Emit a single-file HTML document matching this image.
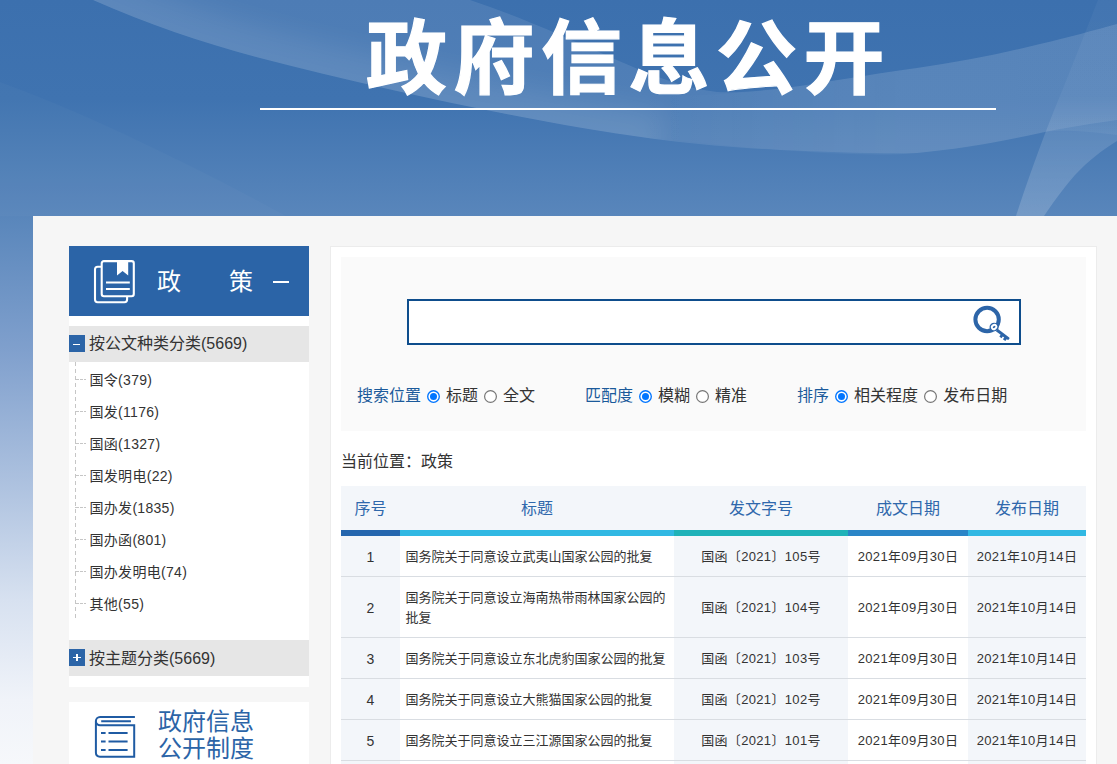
<!DOCTYPE html>
<html lang="zh-CN">
<head>
<meta charset="utf-8">
<title>政府信息公开</title>
<style>
*{box-sizing:border-box;margin:0;padding:0}
html,body{width:1117px;height:764px;overflow:hidden}
body{font-family:"Liberation Sans","Noto Sans CJK SC",sans-serif;color:#333;position:relative;background:#f3f6fa}
#bg{position:absolute;left:0;top:0;width:1117px;height:764px;z-index:0}
#title{position:absolute;left:0;top:0;width:1257px;text-align:center;color:#fff;font-weight:700;font-size:81px;line-height:82px;letter-spacing:6.5px;top:17.8px;-webkit-text-stroke:1.2px #fff;z-index:2;white-space:nowrap}
#tline{position:absolute;left:260px;top:108px;width:736px;height:2px;background:#fff;z-index:2}
#wrap{position:absolute;left:33px;top:216px;width:1190px;height:600px;background:#f6f6f6;z-index:1}
#side{position:absolute;left:36px;top:30px;width:240px;height:441px;background:#fff}
#shead{height:70px;background:#2b64a7;color:#fff;position:relative}
#shead .t{position:absolute;left:88px;top:20px;font-size:24px;line-height:32px;white-space:nowrap}
#shead .t span{display:inline-block}
#shead .mn{position:absolute;left:204px;top:34.5px;width:16px;height:2px;background:#fff}
.bar{position:absolute;left:0;width:240px;height:36px;background:#e6e6e6;font-size:16px;line-height:36px;padding-left:20px;color:#333;white-space:nowrap}
.bar i{position:absolute;left:0;top:9px;width:16px;height:17px;background:#2b64a7}
.bar i:before{content:"";position:absolute;left:3.8px;top:8.8px;width:7.6px;height:1.3px;background:#fff}
.bar i.plus:before{top:7.8px;width:8.4px}
.bar i.plus:after{content:"";position:absolute;left:7.3px;top:5px;width:1.4px;height:7px;background:#fff}
#tree{position:absolute;left:6px;top:116px;width:200px;height:258px;background:repeating-linear-gradient(to bottom,#c6c6c6 0,#c6c6c6 4px,transparent 4px,transparent 7px) left top/1px 100% no-repeat}
#tree div{position:relative;height:32px;line-height:37px;font-size:14px;padding-left:14.5px;letter-spacing:.3px;color:#333;white-space:nowrap}
#tree div:before{content:"";position:absolute;left:0;top:17px;width:11px;height:1px;background:linear-gradient(to right,#c6c6c6 0,#c6c6c6 4px,transparent 4px,transparent 5px,#c6c6c6 5px,#c6c6c6 8px,transparent 8px,transparent 9px,#c6c6c6 9px)}
#side2{position:absolute;left:36px;top:486px;width:240px;height:120px;background:#fff}
#side2 .t{position:absolute;left:89px;top:6px;font-size:24px;line-height:27.4px;color:#2b64a7;white-space:nowrap}
#main{position:absolute;left:297px;top:30px;width:767px;height:600px;background:#fff;border:1px solid #ececec}
#sbox{position:absolute;left:10px;top:10px;width:745px;height:174px;background:#fafafa}
#sinput{position:absolute;left:66px;top:42px;width:614px;height:46px;border:2px solid #0e4d8c;background:#fff}
#opts{position:absolute;left:16px;top:128px;font-size:16px;line-height:22px;white-space:nowrap;color:#333}
#opts b{font-weight:normal;color:#1b5a9b}
.rd{display:inline-block;width:13px;height:13px;vertical-align:-2px;margin:0 6px}
#pos{position:absolute;left:10px;top:204px;font-size:16px;line-height:22px;color:#333}
table{position:absolute;left:10px;top:239px;width:745px;border-collapse:separate;border-spacing:0;table-layout:fixed;font-size:13px}
th{height:50px;padding:0 0 2px 0;font-weight:normal;font-size:16px;color:#2f68ac;background:#f3f6fa;border-bottom:6px solid #31b8e3;text-align:center}
td{height:41px;border-bottom:1px solid #d9dde2;text-align:center;color:#333;line-height:20px;white-space:nowrap;letter-spacing:.33px;padding:1px 0 0 0}
td.l{text-align:left;padding:1px 6px 0 5.5px;white-space:normal;letter-spacing:0}
td:nth-child(odd){background:#f3f6fa}
td:first-child{font-size:14px;letter-spacing:0}
</style>
</head>
<body>
<svg id="bg" viewBox="0 0 1117 764" preserveAspectRatio="none">
<defs>
<linearGradient id="g1" x1="0" y1="0" x2="0" y2="1">
<stop offset="0" stop-color="#3c70ae"/><stop offset="0.13" stop-color="#3f73b0"/><stop offset="0.283" stop-color="#5986bb"/><stop offset="0.46" stop-color="#80a0cd"/><stop offset="0.64" stop-color="#afc3e0"/><stop offset="0.785" stop-color="#d7e1f0"/><stop offset="0.916" stop-color="#f0f3f9"/><stop offset="1" stop-color="#f6f8fb"/>
</linearGradient>
<linearGradient id="g2" gradientUnits="userSpaceOnUse" x1="640" y1="0" x2="900" y2="0"><stop offset="0" stop-color="#fff" stop-opacity="0"/><stop offset="1" stop-color="#fff" stop-opacity="0.05"/></linearGradient>
<linearGradient id="g3" gradientUnits="userSpaceOnUse" x1="0" y1="0" x2="0" y2="216"><stop offset="0" stop-color="#fff" stop-opacity="0.035"/><stop offset="0.45" stop-color="#fff" stop-opacity="0.045"/><stop offset="0.62" stop-color="#fff" stop-opacity="0.12"/><stop offset="1" stop-color="#fff" stop-opacity="0.17"/></linearGradient>
<filter id="b1" x="-20%" y="-50%" width="140%" height="200%"><feGaussianBlur stdDeviation="14"/></filter>
<filter id="b2" x="-5%" y="-5%" width="110%" height="110%"><feGaussianBlur stdDeviation="0.7"/></filter>
<clipPath id="c1"><path d="M93 0 C150 25 200 42 260 58 C360 84 470 108 565 125 C640 138 700 146 780 150 C830 152 880 152 917 153 L1117 120 L1117 0 Z"/></clipPath>
<clipPath id="c2"><path d="M640 96 C700 97 760 92 800 86 C850 78 900 70 917 68 C960 62 1000 54 1040 44 C1070 37 1095 30 1117 24 L1117 135 C1080 130 1060 130 1047 131.5 C1000 142 960 149 917 153 C860 158 760 150 640 136 Z"/></clipPath>
<clipPath id="c3"><path d="M1098 0 C1094 10 1091 18 1087 28 C1076 56 1065 84 1053 113 C1040 146 1027 182 1016 216 L1044 216 C1052 204 1062 190 1075 175 C1088 161 1102 150 1117 141 L1117 0 Z"/></clipPath>
</defs>
<rect width="1117" height="764" fill="url(#g1)"/>
<path filter="url(#b2)" d="M93 0 C150 25 200 42 260 58 C360 84 470 108 565 125 C640 138 700 146 780 150 C830 152 880 154 917 153 C960 149 1000 142 1047 131.5 C1070 127 1095 123 1117 120 L1117 24 C1095 30 1070 37 1040 44 C1000 54 960 62 917 68 C880 73 840 80 800 86 C770 90 740 93 717 92 C690 89 665 80 640 70 C610 57 590 48 560 35 C530 22 500 10 470 0 Z" fill="#fff" opacity="0.085"/>
<g clip-path="url(#c1)"><path filter="url(#b1)" d="M60 -14 C150 25 200 42 260 58 C360 84 470 108 565 125 C600 131 630 136 660 140" fill="none" stroke="#fff" stroke-width="60" opacity="0.085"/></g>
<g clip-path="url(#c2)" filter="url(#b2)"><rect x="600" y="0" width="520" height="220" fill="url(#g2)"/></g>
<g clip-path="url(#c3)" filter="url(#b2)"><rect x="1000" y="0" width="120" height="220" fill="url(#g3)"/></g>
<path d="M0 82 C50 100 100 122 143 143 C200 170 250 196 286 216 L0 216 Z" fill="#fff" opacity="0.025"/>
</svg>
<div id="title">政府信息公开</div>
<div id="tline"></div>
<div id="wrap">
 <div id="side">
  <div id="shead">
   <svg style="position:absolute;left:24px;top:12px" width="44" height="48" viewBox="0 0 44 48" fill="none" stroke="#fff" stroke-width="2.1">
    <path d="M8.7 8.8 H4.6 Q2 8.8 2 11.4 V41.6 Q2 44.2 4.6 44.2 H31.5 Q34.1 44.2 34.1 41.6 V38.2"/>
    <rect x="8.7" y="3.1" width="32.1" height="35.1" rx="2.2"/>
    <path d="M24 3.1 V17.6 L29.6 13 L35.2 17.6 V3.1 Z" fill="#fff" stroke="none"/>
    <path d="M13 24.6 H36.8 M13 31 H36.8" stroke-width="2"/>
   </svg>
   <div class="t"><span>政</span><span style="margin-left:48px">策</span></div>
   <div class="mn"></div>
  </div>
  <div class="bar" style="top:80px"><i></i>按公文种类分类(5669)</div>
  <div id="tree">
   <div>国令(379)</div><div>国发(1176)</div><div>国函(1327)</div><div>国发明电(22)</div><div>国办发(1835)</div><div>国办函(801)</div><div>国办发明电(74)</div><div>其他(55)</div>
  </div>
  <div class="bar" style="top:394px;line-height:38px"><i class="plus"></i>按主题分类(5669)</div>
 </div>
 <div id="side2">
  <svg style="position:absolute;left:24px;top:12px" width="44" height="48" viewBox="0 0 44 48" fill="none" stroke="#1f5ba3" stroke-width="2">
   <path d="M41.9 2.9 H7.05 A4.15 4.15 0 0 0 7.05 11.2 H41.2 V42.75 H7 Q2.9 42.75 2.9 38.6 V7.05"/>
   <path d="M8.2 7.2 H37.9 M8 18.9 H12.6 M15.5 18.9 H34.6 M8 27.4 H12.6 M15.5 27.4 H34.6 M8 35.9 H12.6 M15.5 35.9 H34.6"/>
  </svg>
  <div class="t">政府信息<br>公开制度</div></div>
 <div id="main">
  <div id="sbox">
   <div id="sinput">
    <svg style="position:absolute;left:560px;top:2px" width="44" height="40" viewBox="0 0 44 40">
     <circle cx="18.1" cy="16.5" r="11.7" fill="none" stroke="#2d65a8" stroke-width="4"/>
     <path d="M28.7 25.85 L40.2 34.4 Q40.9 35 40.3 35.7 L39.2 37.1 L37.61 36.2 L36.3 37.97 L33.92 36.21 L35.23 34.45 L33.8 33.38 L32.49 35.14 L30.35 33.55 L31.66 31.79 L26.9 28.25 Z" fill="#2d65a8"/>
     <ellipse cx="25.1" cy="24" rx="4.6" ry="4.3" fill="#2d65a8"/>
     <ellipse cx="25.1" cy="24" rx="3.3" ry="2.9" fill="#fff" transform="rotate(-35 25.1 24)"/>
     <ellipse cx="25.1" cy="24" rx="1.5" ry="0.9" fill="#2d65a8" transform="rotate(-35 25.1 24)"/>
    </svg>
   </div>
   <div id="opts"><b>搜索位置</b><svg class="rd" viewBox="0 0 13 13"><circle cx="6.5" cy="6.5" r="5.8" fill="#fff" stroke="#0075ff" stroke-width="1.35"/><circle cx="6.5" cy="6.5" r="3.5" fill="#0075ff"/></svg>标题<svg class="rd" viewBox="0 0 13 13"><circle cx="6.5" cy="6.5" r="5.9" fill="#fff" stroke="#767676" stroke-width="1.2"/></svg>全文<b style="margin-left:50px">匹配度</b><svg class="rd" viewBox="0 0 13 13"><circle cx="6.5" cy="6.5" r="5.8" fill="#fff" stroke="#0075ff" stroke-width="1.35"/><circle cx="6.5" cy="6.5" r="3.5" fill="#0075ff"/></svg>模糊<svg class="rd" viewBox="0 0 13 13"><circle cx="6.5" cy="6.5" r="5.9" fill="#fff" stroke="#767676" stroke-width="1.2"/></svg>精准<b style="margin-left:50px">排序</b><svg class="rd" viewBox="0 0 13 13"><circle cx="6.5" cy="6.5" r="5.8" fill="#fff" stroke="#0075ff" stroke-width="1.35"/><circle cx="6.5" cy="6.5" r="3.5" fill="#0075ff"/></svg>相关程度<svg class="rd" viewBox="0 0 13 13"><circle cx="6.5" cy="6.5" r="5.9" fill="#fff" stroke="#767676" stroke-width="1.2"/></svg>发布日期</div>
  </div>
  <div id="pos">当前位置：政策</div>
  <table>
   <colgroup><col style="width:59px"><col style="width:274px"><col style="width:174px"><col style="width:120px"><col style="width:118px"></colgroup>
   <tr><th style="border-color:#2566ae">序号</th><th style="border-color:#31b8e3">标题</th><th style="border-color:#1fb2b8">发文字号</th><th style="border-color:#2a85c7">成文日期</th><th style="border-color:#31b8e3">发布日期</th></tr>
   <tr><td>1</td><td class="l">国务院关于同意设立武夷山国家公园的批复</td><td>国函〔2021〕105号</td><td>2021年09月30日</td><td>2021年10月14日</td></tr>
   <tr><td style="height:61px">2</td><td class="l">国务院关于同意设立海南热带雨林国家公园的批复</td><td>国函〔2021〕104号</td><td>2021年09月30日</td><td>2021年10月14日</td></tr>
   <tr><td>3</td><td class="l">国务院关于同意设立东北虎豹国家公园的批复</td><td>国函〔2021〕103号</td><td>2021年09月30日</td><td>2021年10月14日</td></tr>
   <tr><td>4</td><td class="l">国务院关于同意设立大熊猫国家公园的批复</td><td>国函〔2021〕102号</td><td>2021年09月30日</td><td>2021年10月14日</td></tr>
   <tr><td>5</td><td class="l">国务院关于同意设立三江源国家公园的批复</td><td>国函〔2021〕101号</td><td>2021年09月30日</td><td>2021年10月14日</td></tr>
   <tr><td>&nbsp;</td><td class="l">&nbsp;</td><td>&nbsp;</td><td>&nbsp;</td><td>&nbsp;</td></tr>
  </table>
 </div>
</div>
</body>
</html>
